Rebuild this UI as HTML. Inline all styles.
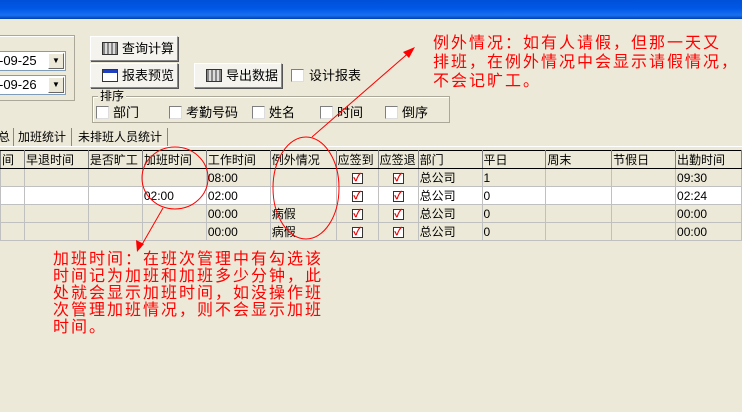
<!DOCTYPE html>
<html><head><meta charset="utf-8"><style>
*{margin:0;padding:0;box-sizing:border-box}
body{width:742px;height:412px;background:#ece9d8;position:relative;overflow:hidden;font-family:"Liberation Sans","WenQuanYi Zen Hei","Noto Sans CJK SC",sans-serif;font-size:12px;color:#000}
.a{position:absolute;white-space:nowrap}
.title{left:0;top:0;width:742px;height:19px;background:linear-gradient(#0050d8,#0058e6 45%,#1a70f0 80%,#0040b0)}
.btn{position:absolute;height:25px;background:#f4f3ee;border:1px solid #fff;border-right-color:#888;border-bottom-color:#888;box-shadow:1px 1px 0 #555;font-size:13px;line-height:23px;padding-left:31px;white-space:nowrap}
.ico{position:absolute;left:11px;top:5px;width:16px;height:13px;border:1px solid #333;background:repeating-linear-gradient(90deg,#888 0 2px,#ddd 2px 4px)}
.cb{position:absolute;width:13px;height:13px;background:#fff;border:1px solid #7f7f7f;border-right-color:#ddd;border-bottom-color:#ddd}
.grp{position:absolute;border:1px solid #aca899;box-shadow:inset 1px 1px 0 #fff}
.combo{position:absolute;height:20px;background:#fff;border:1px solid #7f9db9;font-size:13px;line-height:18px}
.dd{position:absolute;right:1px;top:1px;width:16px;height:16px;background:#ece9d8;border:1px solid #fff;border-right-color:#666;border-bottom-color:#666;font-size:8px;text-align:center;line-height:14px}
table{position:absolute;left:0;top:150px;border-collapse:collapse;font-size:12px}
td{border:1px solid #c0c0c0;height:17px;padding:0 1px;white-space:nowrap;overflow:hidden;background:#ece9d8}
tr.h td{border-color:#808080;border-top:1px solid #000;border-bottom:1px solid #000}
tr.w td{background:#fff}
.ck{display:inline-block;width:11px;height:11px;border:1px solid #333;background:#fff;color:#e00;font-size:11px;line-height:9px;text-align:center;font-weight:bold;vertical-align:middle}
.red{position:absolute;color:#f00;font-size:16px;letter-spacing:2px;white-space:nowrap;font-family:"WenQuanYi Zen Hei","Noto Sans CJK SC",sans-serif}
.lb{font-size:13px;line-height:15px}
</style></head><body>
<div class="a title"></div>

<div class="grp" style="left:-2px;top:35px;width:77px;height:66px"></div>
<div class="combo" style="left:-2px;top:51px;width:68px">-09-25<div class="dd">▼</div></div>
<div class="combo" style="left:-2px;top:75px;width:68px">-09-26<div class="dd">▼</div></div>

<div class="btn" style="left:90px;top:36px;width:88px"><div class="ico"></div>查询计算</div>
<div class="btn" style="left:90px;top:63px;width:88px"><div class="ico" style="background:linear-gradient(#2040c0 0 3px,#fff 3px)"></div>报表预览</div>
<div class="btn" style="left:194px;top:63px;width:88px"><div class="ico"></div>导出数据</div>
<div class="cb" style="left:291px;top:69px"></div><div class="a lb" style="left:309px;top:68px">设计报表</div>

<div class="grp" style="left:92px;top:96px;width:358px;height:27px"></div>
<div class="a" style="left:98px;top:89px;background:#ece9d8;padding:0 2px;line-height:14px">排序</div>
<div class="cb" style="left:96px;top:106px"></div><div class="a lb" style="left:113px;top:105px">部门</div>
<div class="cb" style="left:169px;top:106px"></div><div class="a lb" style="left:186px;top:105px">考勤号码</div>
<div class="cb" style="left:252px;top:106px"></div><div class="a lb" style="left:269px;top:105px">姓名</div>
<div class="cb" style="left:320px;top:106px"></div><div class="a lb" style="left:337px;top:105px">时间</div>
<div class="cb" style="left:385px;top:106px"></div><div class="a lb" style="left:402px;top:105px">倒序</div>

<div class="a" style="left:0;top:127px;width:742px;height:20px;border-bottom:1px solid #fff"></div>
<div class="a" style="left:-2px;top:128px;width:16px;height:18px;border-right:1px solid #888;line-height:18px">总</div>
<div class="a" style="left:14px;top:128px;width:58px;height:18px;border-right:1px solid #888;padding-left:4px;line-height:18px">加班统计</div>
<div class="a" style="left:74px;top:128px;width:94px;height:18px;border-right:1px solid #888;padding-left:4px;line-height:18px">未排班人员统计</div>

<table>
<colgroup><col style="width:24px"><col style="width:64px"><col style="width:54px"><col style="width:64px"><col style="width:64px"><col style="width:66px"><col style="width:42px"><col style="width:40px"><col style="width:64px"><col style="width:64px"><col style="width:66px"><col style="width:64px"><col style="width:66px"></colgroup>
<tr class="h"><td>间</td><td>早退时间</td><td>是否旷工</td><td>加班时间</td><td>工作时间</td><td>例外情况</td><td>应签到</td><td>应签退</td><td>部门</td><td>平日</td><td>周末</td><td>节假日</td><td>出勤时间</td></tr>
<tr><td></td><td></td><td></td><td></td><td>08:00</td><td></td><td align="center"><span class="ck">✓</span></td><td align="center"><span class="ck">✓</span></td><td>总公司</td><td>1</td><td></td><td></td><td>09:30</td></tr>
<tr class="w"><td></td><td></td><td></td><td>02:00</td><td>02:00</td><td></td><td align="center"><span class="ck">✓</span></td><td align="center"><span class="ck">✓</span></td><td>总公司</td><td>0</td><td></td><td></td><td>02:24</td></tr>
<tr><td></td><td></td><td></td><td></td><td>00:00</td><td>病假</td><td align="center"><span class="ck">✓</span></td><td align="center"><span class="ck">✓</span></td><td>总公司</td><td>0</td><td></td><td></td><td>00:00</td></tr>
<tr><td></td><td></td><td></td><td></td><td>00:00</td><td>病假</td><td align="center"><span class="ck">✓</span></td><td align="center"><span class="ck">✓</span></td><td>总公司</td><td>0</td><td></td><td></td><td>00:00</td></tr>
</table>

<svg class="a" style="left:0;top:0" width="742" height="412">
<ellipse cx="175" cy="178" rx="33" ry="31" fill="none" stroke="#f00" stroke-width="1"/>
<ellipse cx="306" cy="188" rx="33" ry="51" fill="none" stroke="#f00" stroke-width="1"/>
<line x1="312" y1="137" x2="412" y2="50" stroke="#f00"/>
<polygon points="415,47 403,52 409,58" fill="#f00"/>
<line x1="163" y1="208" x2="140" y2="248" stroke="#f00"/>
<polygon points="137,252 136,240 144,244" fill="#f00"/>
</svg>

<div class="red" style="left:433px;top:32px;line-height:19px">例外情况：如有人请假，但那一天又<br>排班，在例外情况中会显示请假情况，<br>不会记旷工。</div>
<div class="red" style="left:53px;top:249px;line-height:17px">加班时间：在班次管理中有勾选该<br>时间记为加班和加班多少分钟，此<br>处就会显示加班时间，如没操作班<br>次管理加班情况，则不会显示加班<br>时间。</div>
</body></html>
